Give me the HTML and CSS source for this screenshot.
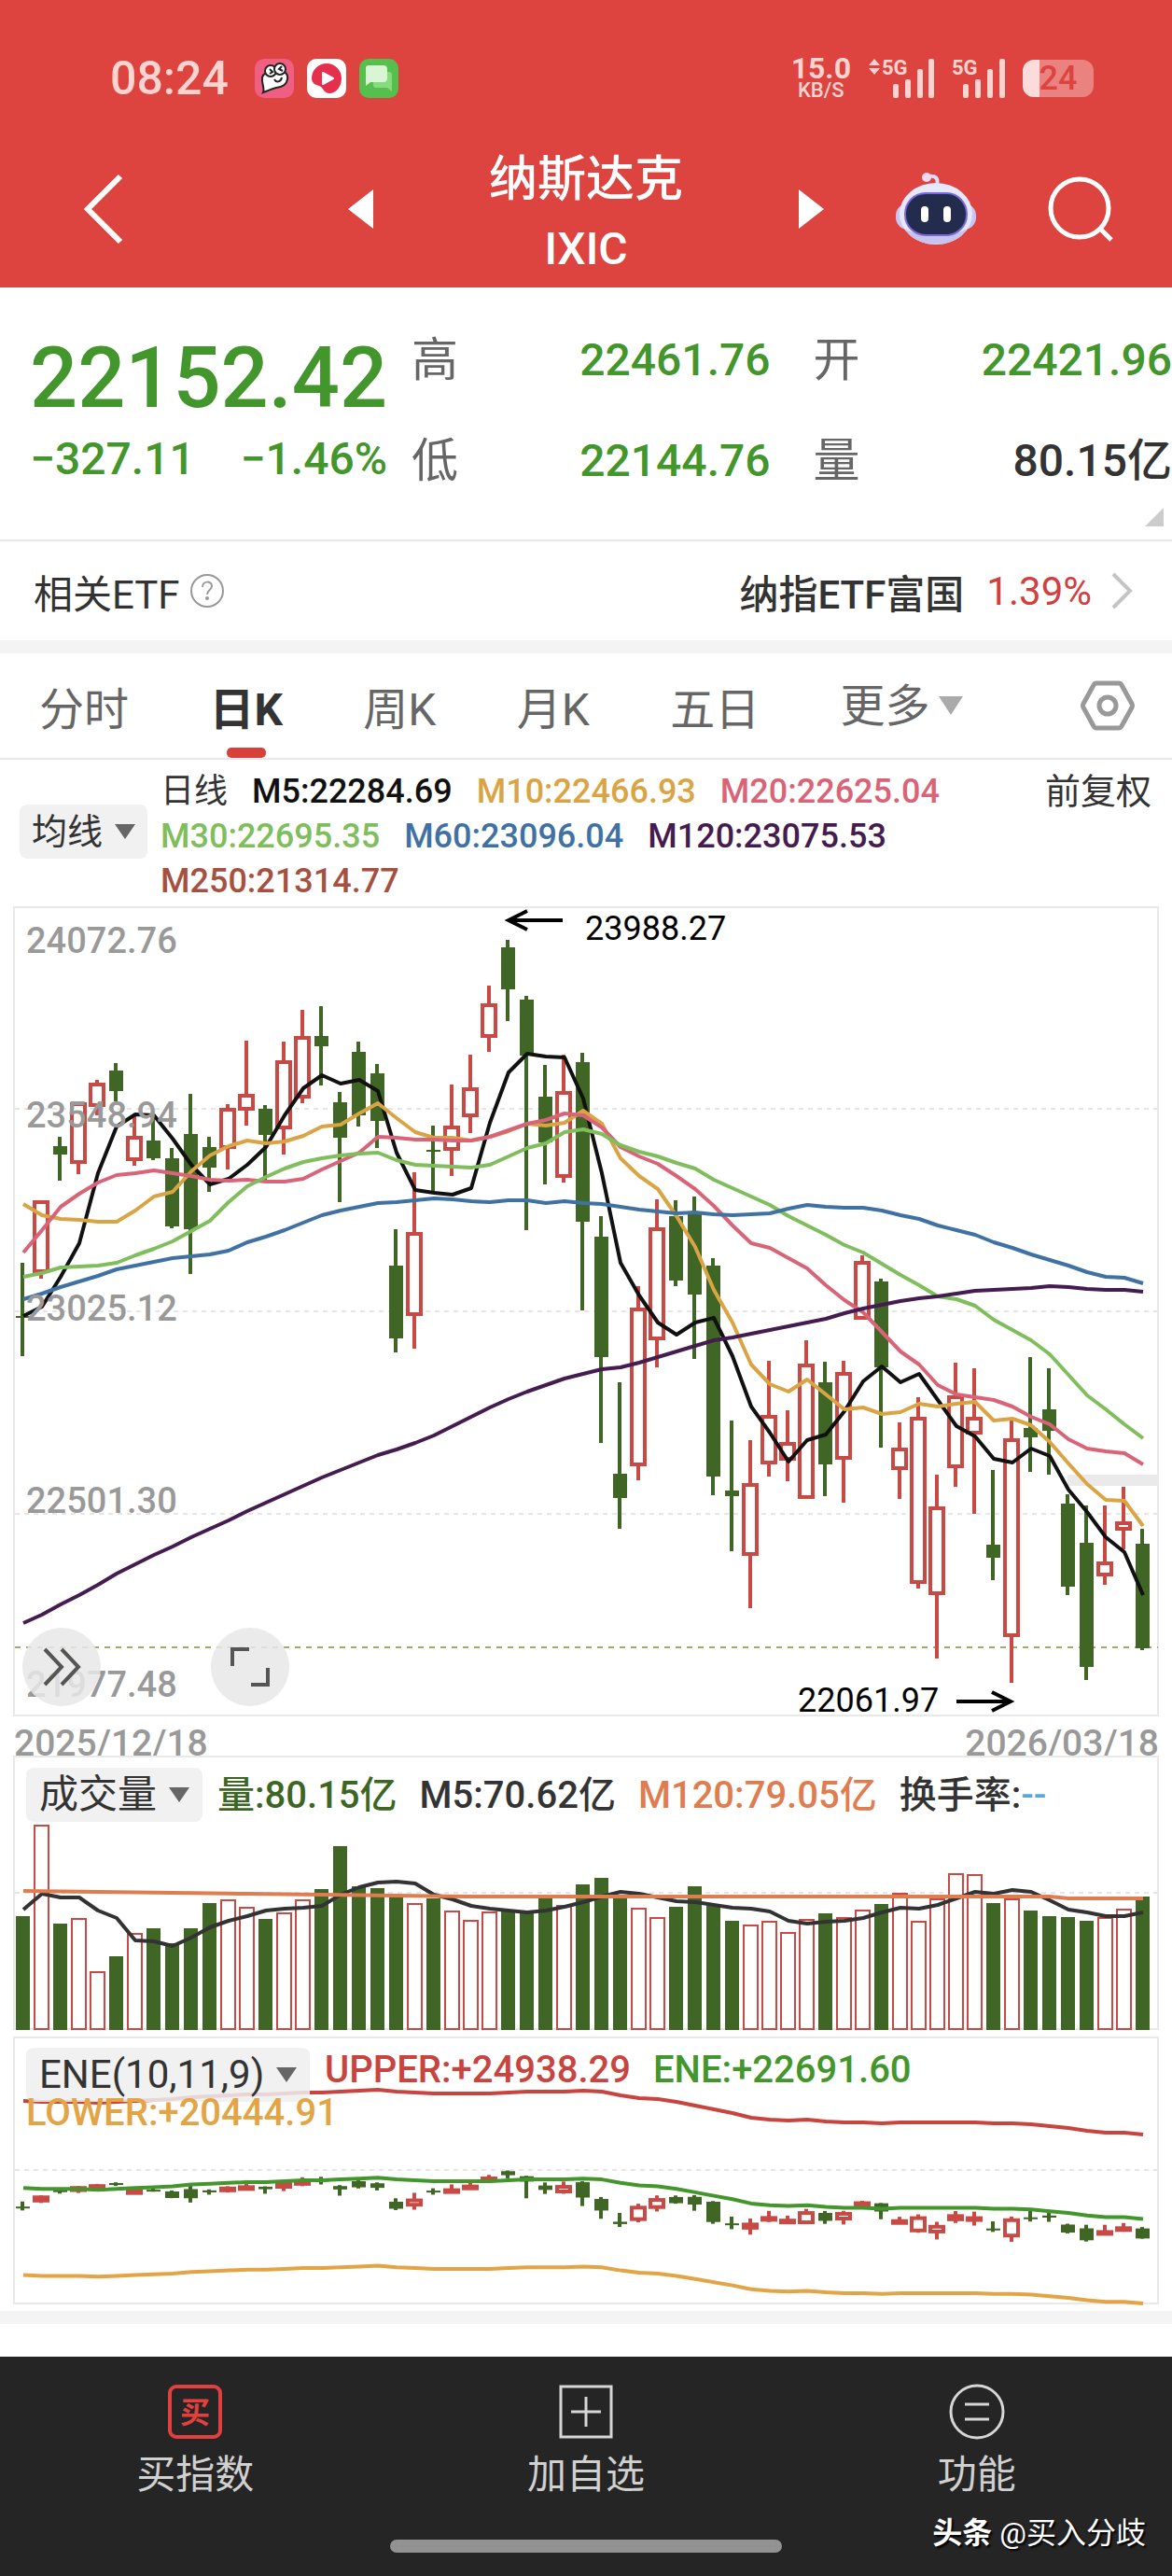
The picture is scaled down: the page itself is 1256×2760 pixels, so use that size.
FILE: index.html
```html
<!DOCTYPE html>
<html lang="zh-CN">
<head>
    <meta charset="UTF-8">
    <meta name="viewport" content="width=device-width, initial-scale=1.0">
    <title>纳斯达克 IXIC</title>
    <link rel="stylesheet" href="styles.css">
    <script src="script.js" defer></script>
</head>
<body>
    <header class="top">
        <div class="status">
            <span class="clock">08:24</span>
            <div class="apps">
                <svg width="42" height="42" viewBox="0 0 42 42">
                    <rect width="42" height="42" rx="10" fill="#ee5f82"/>
                    <path d="M8 20c1-4 5-6 11-6l8-1c6 0 9 4 8 9-1 6-5 8-12 9-5 1-8 3-14 5 2-4-2-10-1-16z" fill="#fff" stroke="#222" stroke-width="2"/>
                    <circle cx="17" cy="13" r="6" fill="#fff" stroke="#222" stroke-width="2"/>
                    <circle cx="27" cy="11" r="6" fill="#fff" stroke="#222" stroke-width="2"/>
                    <path d="M16 11l3 3-3 2M29 8l-3 3 4 2M21 22c2 4 7 3 8-2" fill="none" stroke="#222" stroke-width="2"/>
                </svg>
                <svg width="42" height="42" viewBox="0 0 42 42">
                    <rect width="42" height="42" rx="10" fill="#fff"/>
                    <path d="M21 5c9 0 16 7 16 16s-6 16-13 16c-5 0-6-4-9-7-3-2-10-2-10-9C5 12 12 5 21 5z" fill="#e62e4d"/>
                    <path d="M17 15l11 6-11 6z" fill="#fff" stroke="#fff" stroke-width="2" stroke-linejoin="round"/>
                </svg>
                <svg width="42" height="42" viewBox="0 0 42 42">
                    <rect width="42" height="42" rx="10" fill="#55c04e"/>
                    <path d="M16 14h16q3 0 3 3v18l-5-4H18q-3 0-3-3z" fill="#86db7a"/>
                    <path d="M10 7h16q4 0 4 4v10q0 4-4 4H12l-5 4V10q0-3 3-3z" fill="#d9f5d3"/>
                </svg>
            </div>
            <div class="speed"><b>15.0</b><span>KB/S</span></div>
            <svg class="signal" width="72" height="44" viewBox="0 0 72 44">
                <path d="M1 8l6-7 6 7zM1 11l6 7 6-7z"/>
                <text x="15" y="18">5G</text>
                <rect x="27" y="28" width="6" height="15" rx="2"/><rect x="40" y="23" width="6" height="20" rx="2"/><rect x="53" y="12" width="6" height="31" rx="2"/><rect x="65" y="1" width="6" height="42" rx="2"/>
            </svg>
            <svg class="signal" width="58" height="44" viewBox="0 0 58 44">
                <text x="0" y="18">5G</text>
                <rect x="12" y="28" width="6" height="15" rx="2"/><rect x="25" y="23" width="6" height="20" rx="2"/><rect x="38" y="12" width="6" height="31" rx="2"/><rect x="51" y="1" width="6" height="42" rx="2"/>
            </svg>
            <div class="battery">24</div>
        </div>
        <div class="titlebar">
            <div class="side side-left">
                <button class="icon-btn" type="button" aria-label="返回">
                    <svg width="42" height="76" viewBox="0 0 42 76"><path d="M39 3L4 38l35 35" fill="none" stroke="#fff" stroke-width="6"/></svg>
                </button>
                <button class="icon-btn" type="button" aria-label="上一个">
                    <svg width="27" height="42" viewBox="0 0 27 42"><path d="M27 0v42L0 21z" fill="#fff"/></svg>
                </button>
            </div>
            <h1 class="title">纳斯达克<span>IXIC</span></h1>
            <div class="side side-right">
                <button class="icon-btn" type="button" aria-label="下一个">
                    <svg width="27" height="42" viewBox="0 0 27 42"><path d="M0 0v42l27-21z" fill="#fff"/></svg>
                </button>
                <button class="icon-btn" type="button" aria-label="智能助手">
                    <svg width="86" height="78" viewBox="0 0 86 78">
                        <path d="M44 14c2-8-1-11-9-10" fill="none" stroke="#dcdcf8" stroke-width="4"/>
                        <circle cx="33" cy="5" r="5" fill="#f4d8ee"/>
                        <rect x="0" y="33" width="86" height="28" rx="13" fill="#c9c5f2"/>
                        <ellipse cx="43" cy="44" rx="39" ry="33" fill="#e6e8fb"/>
                        <path d="M10 60c10 22 56 22 66 0-14 10-52 10-66 0z" fill="#c6c3f0"/>
                        <rect x="10" y="22" width="66" height="45" rx="22" fill="#232c4c" stroke="#7a68d8" stroke-width="2"/>
                        <rect x="27" y="36" width="8" height="17" rx="4" fill="#fff"/>
                        <rect x="51" y="36" width="8" height="17" rx="4" fill="#fff"/>
                    </svg>
                </button>
                <button class="icon-btn" type="button" aria-label="搜索">
                    <svg width="72" height="72" viewBox="0 0 72 72"><circle cx="35" cy="35" r="31" fill="none" stroke="#fff" stroke-width="5"/><path d="M56 56l13 13" stroke="#fff" stroke-width="5"/></svg>
                </button>
            </div>
        </div>
    </header>

    <section class="quote">
        <div class="last">
            <p class="price">22152.42</p>
            <p class="change"><span>−327.11</span><span>−1.46%</span></p>
        </div>
        <dl class="stats">
            <div><dt>高</dt><dd>22461.76</dd></div>
            <div><dt>开</dt><dd>22421.96</dd></div>
            <div><dt>低</dt><dd>22144.76</dd></div>
            <div><dt>量</dt><dd class="dark">80.15亿</dd></div>
        </dl>
        <i class="corner"></i>
    </section>

    <a class="etf" href="#">
        <span class="etf-label">相关ETF</span>
        <svg width="38" height="38" viewBox="0 0 38 38"><circle cx="19" cy="19" r="17" fill="none" stroke="#999" stroke-width="2"/><path d="M14 15c0-7 10-7 10-1 0 4-5 4-5 9" fill="none" stroke="#999" stroke-width="2"/><circle cx="19" cy="27" r="2" fill="#999"/></svg>
        <span class="etf-name">纳指ETF富国</span>
        <span class="etf-rate">1.39%</span>
        <svg width="24" height="40" viewBox="0 0 24 40"><path d="M3 2l18 18L3 38" fill="none" stroke="#c4c4c4" stroke-width="4"/></svg>
    </a>

    <nav class="tabs">
        <button type="button">分时</button>
        <button type="button" class="active">日K</button>
        <button type="button">周K</button>
        <button type="button">月K</button>
        <button type="button">五日</button>
        <label class="more">
            <select aria-label="更多周期"><option>更多</option></select>
            <i class="caret"></i>
        </label>
        <button type="button" class="setting" aria-label="设置">
            <svg width="58" height="54" viewBox="0 0 58 54"><path d="M17 3h24q2 0 3 2l11 20q1 2 0 4L44 49q-1 2-3 2H17q-2 0-3-2L3 29q-1-2 0-4L14 5q1-2 3-2z" fill="none" stroke="#999" stroke-width="5"/><circle cx="29" cy="27" r="9" fill="none" stroke="#999" stroke-width="5"/></svg>
        </button>
    </nav>

    <main class="charts">
        <div class="legend">
            <label class="picker">
                <select aria-label="主图指标"><option>均线</option></select>
                <i class="caret"></i>
            </label>
            <p class="ma-list">
                <span>日线</span>
                <span class="m5">M5:22284.69</span>
                <span class="m10">M10:22466.93</span>
                <span class="m20">M20:22625.04</span>
                <span class="m30">M30:22695.35</span>
                <span class="m60">M60:23096.04</span>
                <span class="m120">M120:23075.53</span>
                <span class="m250">M250:21314.77</span>
            </p>
            <button type="button" class="adjust">前复权</button>
        </div>

        <div class="panel">
            <svg id="kline" class="plot" viewBox="0 0 1256 880" role="img" aria-label="日K线图"></svg>
            <div class="tools">
                <button type="button" aria-label="展开">
                    <svg width="40" height="42" viewBox="0 0 40 42"><path d="M2 2l18 19L2 40M20 2l18 19-18 19" fill="none" stroke="#555" stroke-width="4"/></svg>
                </button>
                <button type="button" aria-label="全屏">
                    <svg width="44" height="44" viewBox="0 0 44 44"><path d="M3 21V3h18M41 23v18H23" fill="none" stroke="#555" stroke-width="4"/></svg>
                </button>
            </div>
        </div>
        <div class="dates"><span>2025/12/18</span><span>2026/03/18</span></div>

        <div class="panel">
            <svg id="volume" class="plot" viewBox="0 0 1256 300" role="img" aria-label="成交量图"></svg>
            <div class="sub-legend">
                <label class="picker">
                    <select aria-label="副图一"><option>成交量</option></select>
                    <i class="caret"></i>
                </label>
                <p>
                    <span class="vol">量:80.15亿</span>
                    <span>M5:70.62亿</span>
                    <span class="vol120">M120:79.05亿</span>
                    <span>换手率:<b class="dash">--</b></span>
                </p>
            </div>
        </div>

        <div class="panel">
            <svg id="ene" class="plot" viewBox="0 0 1256 296" role="img" aria-label="ENE图"></svg>
            <div class="sub-legend ene-legend">
                <label class="picker">
                    <select aria-label="副图二"><option>ENE(10,11,9)</option></select>
                    <i class="caret"></i>
                </label>
                <p>
                    <span class="upper">UPPER:+24938.29</span>
                    <span class="mid">ENE:+22691.60</span>
                </p>
                <p class="lower">LOWER:+20444.91</p>
            </div>
        </div>
    </main>

    <footer class="bottom">
        <nav class="actions">
            <a href="#">
                <svg width="60" height="60" viewBox="0 0 60 60"><rect x="3" y="3" width="54" height="54" rx="7" fill="none" stroke="#e0413f" stroke-width="4"/><text x="30" y="42" text-anchor="middle" class="buy">买</text></svg>
                买指数
            </a>
            <a href="#">
                <svg width="60" height="60" viewBox="0 0 60 60"><path d="M3 3h54v54H3zM30 14v32M14 30h32" fill="none" stroke="#d6d6d6" stroke-width="3"/></svg>
                加自选
            </a>
            <a href="#">
                <svg width="60" height="60" viewBox="0 0 60 60"><circle cx="30" cy="30" r="28" fill="none" stroke="#d6d6d6" stroke-width="3"/><path d="M17 22h26M17 38h26" stroke="#d6d6d6" stroke-width="3"/></svg>
                功能
            </a>
        </nav>
        <i class="home-bar"></i>
        <p class="mark"><b>头条</b> @买入分歧</p>
    </footer>
</body>
</html>
```
FILE: styles.css
```css
* {
    box-sizing: border-box;
}

body {
    margin: 0;
    background: #fff;
    color: #333;
    font-family: Roboto, "Noto Sans CJK SC", sans-serif;
    font-size: 42px;
}

p, h1, dl, dd {
    margin: 0;
}

button, select {
    padding: 0;
    border: 0;
    background: none;
    color: inherit;
    font: inherit;
    appearance: none;
}

a {
    color: inherit;
    text-decoration: none;
}

svg {
    display: block;
    flex: none;
    overflow: visible;
}

/* header */
.top {
    background: #dd433f;
    color: #fff;
}

.status {
    display: flex;
    align-items: center;
    height: 156px;
    padding: 12px 84px 0 118px;
    color: #ffd3d0;
}

.clock {
    font-size: 50px;
    font-weight: 500;
}

.apps {
    display: flex;
    gap: 14px;
    margin: 0 auto 0 28px;
}

.speed {
    display: flex;
    flex-direction: column;
    align-items: center;
    margin-right: 18px;
    font-size: 22px;
    font-weight: 500;
    line-height: 22px;
}

.speed b {
    font-size: 32px;
    font-weight: 700;
    line-height: 26px;
}

.signal {
    margin-right: 18px;
    fill: #ffd3d0;
    font-size: 22px;
    font-weight: 700;
}

.battery {
    width: 76px;
    height: 40px;
    border-radius: 12px;
    background: linear-gradient(90deg, #fbdcda 24%, #ea8380 24%);
    color: #dd433f;
    font-size: 36px;
    font-weight: 500;
    line-height: 40px;
    text-align: center;
}

.titlebar {
    display: grid;
    grid-template-columns: 1fr 456px 1fr;
    height: 152px;
}

.side {
    display: flex;
    align-items: center;
    justify-content: space-between;
    padding-bottom: 16px;
}

.side-left {
    padding-left: 90px;
}

.side-right {
    padding-right: 62px;
}

.title {
    font-size: 52px;
    font-weight: 500;
    line-height: 74px;
    text-align: center;
}

.title span {
    display: block;
    font-size: 48px;
}

/* quote */
.quote {
    position: relative;
    display: flex;
    gap: 26px;
    height: 272px;
    padding: 38px 0 0 32px;
    border-bottom: 2px solid #e8e8e8;
}

.last, .stats dd {
    color: #43962b;
}

.price {
    height: 116px;
    font-size: 90px;
    font-weight: 500;
    line-height: 120px;
}

.change {
    display: flex;
    justify-content: space-between;
    font-size: 48px;
    font-weight: 500;
    line-height: 60px;
}

.stats {
    flex: 1;
    display: grid;
    grid-template-columns: 1fr 1fr;
    column-gap: 46px;
    grid-auto-rows: 108px;
}

.stats div {
    display: flex;
    justify-content: space-between;
    font-size: 50px;
    line-height: 80px;
}

.stats dt {
    color: #666;
}

.stats dd {
    font-size: 48px;
    font-weight: 500;
}

.stats .dark {
    color: #333;
}

.corner {
    position: absolute;
    right: 9px;
    bottom: 14px;
    border: 10px solid;
    border-color: transparent #ccc #ccc transparent;
}

.etf {
    display: flex;
    align-items: center;
    height: 120px;
    padding: 0 42px 0 36px;
    border-bottom: 14px solid #f4f4f4;
}

.etf-label {
    margin-right: 10px;
}

.etf-name {
    margin-left: auto;
    font-weight: 500;
}

.etf-rate {
    margin: 0 20px 0 24px;
    color: #d0403f;
}

/* tabs */
.tabs {
    display: flex;
    align-items: stretch;
    justify-content: space-between;
    height: 114px;
    padding: 0 40px 0 42px;
    border-bottom: 2px solid #e8e8e8;
    color: #666;
    font-size: 48px;
}

.tabs .active {
    position: relative;
    color: #333;
    font-weight: 700;
}

.tabs .active::after {
    content: "";
    position: absolute;
    left: 50%;
    bottom: 0;
    width: 42px;
    height: 11px;
    margin-left: -21px;
    border-radius: 5px;
    background: #d8403a;
}

.more {
    display: flex;
    align-items: center;
    gap: 8px;
    color: #666;
}

.caret {
    border: 11px solid transparent;
    border-top: 16px solid #666;
    border-bottom: 0;
}

.more .caret {
    border-width: 20px 13px 0;
    border-top-color: #aaa;
}

.setting {
    margin-left: 40px;
}

/* chart legends */
.legend {
    display: flex;
    align-items: flex-start;
    height: 146px;
    padding: 10px 22px 0 21px;
    font-size: 36px;
    line-height: 48px;
}

.picker {
    display: flex;
    align-items: center;
    gap: 12px;
    height: 58px;
    padding: 0 13px;
    border-radius: 8px;
    background: rgba(238, 238, 238, .85);
    font-size: 38px;
}

.legend .picker {
    margin-top: 38px;
    margin-right: 14px;
}

.ma-list {
    flex: 1;
    display: flex;
    flex-wrap: wrap;
    column-gap: 26px;
}

.ma-list span {
    font-weight: 500;
}

.ma-list span:first-child {
    font-weight: 400;
}

.m5 { color: #111; }
.m10 { color: #daa444; }
.m20 { color: #d96477; }
.m30 { color: #80bd5c; }
.m60 { color: #3f72a3; }
.m120 { color: #451c50; }
.m250 { color: #a55141; }

.adjust {
    font-size: 38px;
}

.panel {
    position: relative;
}

.plot {
    width: 100%;
    height: auto;
}

.tools {
    position: absolute;
    left: 24px;
    bottom: 12px;
    display: flex;
    gap: 118px;
}

.tools button {
    display: flex;
    align-items: center;
    justify-content: center;
    width: 84px;
    height: 84px;
    border-radius: 50%;
    background: rgba(232, 232, 232, .85);
}

.dates {
    display: flex;
    justify-content: space-between;
    height: 40px;
    padding: 8px 14px 0 15px;
    color: #999;
    font-size: 39px;
    font-weight: 500;
    line-height: 40px;
}

.sub-legend {
    position: absolute;
    top: 14px;
    left: 28px;
    right: 16px;
    display: flex;
    flex-wrap: wrap;
    column-gap: 16px;
    font-size: 40px;
    line-height: 60px;
}

.sub-legend p {
    display: flex;
    gap: 24px;
    font-weight: 500;
}

.sub-legend .picker {
    padding: 0 14px;
    font-size: 42px;
}

.sub-legend b {
    font-weight: 500;
}

.ene-legend p {
    line-height: 48px;
}

.ene-legend .lower {
    flex-basis: 100%;
    margin-top: -12px;
}

.vol { color: #3d6624; }
.vol120 { color: #df7c50; }
.dash { color: #5aa9dc; }
.upper { color: #c7443f; }
.mid { color: #43962b; }
.lower { color: #e2a445; }

/* plots */
.frame { fill: none; stroke: #e9e9e9; stroke-width: 2; }
.grid { stroke: #e6e6e6; stroke-width: 2; stroke-dasharray: 5 5; }
.now { stroke: #a3a86f; stroke-width: 2; stroke-dasharray: 6 6; }
.gap { fill: #eaeaea; }
.up { fill: #fff; stroke: #c94a45; stroke-width: 4; }
.up-thin { fill: #fff; stroke: #c94a45; stroke-width: 2; }
.down { fill: #3f6624; }
.wick-up { stroke: #c94a45; stroke-width: 4; }
.wick-down { stroke: #3f6624; stroke-width: 4; }
.line { fill: none; stroke: currentColor; stroke-width: 4; stroke-linejoin: round; }
.axis { fill: #999; font-size: 38px; font-weight: 500; }
.note { fill: #000; font-size: 36px; }
.arrow { fill: none; stroke: #000; stroke-width: 4; }

/* bottom */
.bottom {
    position: relative;
    height: 284px;
    border-top: 14px solid #f4f4f4;
}

.actions {
    display: grid;
    grid-template-columns: repeat(3, 1fr);
    height: 235px;
    margin-top: 35px;
    padding-top: 29px;
    background: #252525;
    color: #d0d0d0;
}

.actions a {
    display: flex;
    flex-direction: column;
    align-items: center;
    gap: 8px;
    line-height: 60px;
}

.buy {
    fill: #e0413f;
    font-size: 32px;
    font-weight: 700;
}

.home-bar {
    position: absolute;
    left: 50%;
    bottom: 25px;
    width: 420px;
    height: 14px;
    margin-left: -210px;
    border-radius: 7px;
    background: #929292;
}

.mark {
    position: absolute;
    right: 28px;
    bottom: 24px;
    color: #fff;
    font-size: 32px;
    line-height: 44px;
    text-shadow: 2px 2px 2px #000;
}
```
FILE: script.js
```js
// one row per trading day: up, high, body top, body bottom, low, volume top
const days = [
    [0, 393, 450, 452, 493, 173], [1, 326, 326, 404, 410, 75], [0, 258, 268, 277, 305, 181],
    [1, 221, 221, 287, 298, 175], [1, 197, 200, 226, 235, 232], [0, 179, 187, 209, 220, 216],
    [1, 235, 257, 284, 289, 191], [0, 235, 262, 281, 283, 186], [0, 270, 281, 354, 356, 202],
    [0, 212, 255, 357, 405, 186], [0, 258, 269, 291, 317, 159], [1, 223, 227, 271, 293, 155],
    [1, 155, 212, 230, 246, 163], [0, 224, 228, 256, 307, 176], [1, 156, 176, 250, 277, 169],
    [1, 122, 150, 217, 222, 155], [0, 118, 150, 161, 203, 144], [0, 210, 221, 259, 328, 98],
    [0, 156, 167, 235, 247, 141], [0, 180, 190, 241, 270, 143], [0, 357, 396, 474, 489, 152],
    [1, 296, 360, 450, 485, 159], [0, 246, 272, 274, 317, 154], [1, 202, 246, 273, 300, 167],
    [1, 170, 205, 237, 254, 177], [1, 96, 115, 152, 167, 168], [0, 47, 55, 100, 134, 167],
    [0, 107, 111, 171, 358, 168], [0, 181, 215, 264, 309, 154], [1, 170, 209, 302, 307, 161],
    [0, 168, 178, 349, 444, 139], [0, 343, 365, 494, 586, 132], [0, 521, 619, 645, 678, 152],
    [1, 418, 441, 611, 626, 164], [1, 325, 355, 476, 505, 174], [0, 326, 343, 412, 418, 163],
    [0, 322, 341, 427, 496, 141], [0, 388, 396, 622, 642, 160], [0, 562, 637, 643, 702, 178],
    [1, 583, 629, 707, 763, 182], [1, 498, 556, 609, 622, 178], [1, 551, 585, 605, 627, 190],
    [1, 476, 501, 646, 646, 176], [0, 499, 521, 609, 643, 170], [1, 498, 510, 604, 650, 174],
    [1, 385, 391, 454, 454, 166], [0, 410, 413, 505, 591, 160], [1, 564, 591, 615, 646, 148],
    [1, 537, 558, 737, 742, 178], [1, 620, 654, 749, 817, 154], [1, 500, 535, 613, 633, 127],
    [1, 506, 558, 577, 662, 128], [0, 615, 695, 709, 733, 159], [1, 561, 581, 794, 843, 154],
    [0, 494, 570, 580, 617, 167], [0, 506, 550, 573, 620, 173], [0, 641, 651, 740, 749, 174],
    [0, 653, 693, 826, 840, 178], [1, 653, 713, 729, 738, 174], [1, 633, 670, 680, 700, 165],
    [0, 678, 694, 806, 808, 152]
];

const averages = {
    m5: [450,440,408,372,297,247,234,235,260,288,309,303,288,269,235,206,192,201,197,209,275,315,318,320,313,243,189,169,172,173,217,297,393,428,457,470,457,452,493,547,575,606,583,577,552,520,504,521,512,540,568,579,603,607,592,600,636,660,687,703,749],
    m10: [330,342,346,347,349,349,337,322,317,295,278,268,262,265,263,257,247,245,233,222,238,253,259,259,262,258,252,244,246,243,230,244,281,300,314,343,376,422,457,502,523,531,518,534,550,548,555,553,544,547,544,542,562,560,567,585,608,630,647,648,675],
    m20: [382,358,333,319,307,299,297,294,297,300,304,305,304,306,306,303,293,284,275,258,259,261,261,262,262,258,251,244,240,233,235,248,269,279,287,300,314,332,353,372,377,388,399,417,433,446,467,488,502,524,534,537,540,547,558,566,582,592,595,597,609],
    m30: [408,404,398,397,396,393,385,378,370,359,348,328,311,301,292,285,281,278,276,275,283,288,289,290,291,288,279,270,265,253,250,255,267,274,279,286,292,304,313,322,331,343,353,363,374,382,394,406,417,429,432,439,454,465,476,491,513,535,550,566,581],
    m60: [432,426,419,413,407,400,396,392,388,386,384,380,371,365,358,350,342,337,333,329,328,326,324,325,327,328,326,326,329,327,329,330,333,336,338,340,339,341,342,341,340,335,331,333,334,334,337,342,346,353,358,363,371,377,384,390,396,403,408,409,415],
    m120: [779,770,759,749,738,726,716,706,697,687,678,669,659,650,641,632,623,615,607,599,593,586,578,568,558,548,539,531,524,517,512,507,505,500,494,488,482,476,473,469,465,461,457,453,447,442,438,434,431,429,426,423,422,421,420,418,419,421,422,422,424]
};

const volM5 = [166,149,153,153,167,175,199,200,205,196,185,178,173,167,165,164,162,150,142,137,136,138,150,155,162,165,167,169,167,163,158,152,147,149,153,157,158,161,164,165,168,178,181,179,178,175,169,164,165,161,154,147,149,145,147,156,166,169,173,173,169];
const volM120 = days.map((d, i) => i < 52 ? 146 + Math.min(6, i / 4) : i < 56 ? 152 : 154);

const eneUpper = [71,72,72,72,73,72,71,70,69,67,66,65,64,64,63,62,62,61,60,59,61,62,63,63,63,63,62,61,61,61,60,61,65,68,69,72,76,80,84,89,91,92,91,93,94,94,95,94,94,94,94,94,95,95,96,98,100,103,105,105,107];
const eneMid = eneUpper.map(y => y * 0.92 + 99);
const eneLower = eneUpper.map((y, i) => eneMid[i] * 2 - y);

const px = i => 24 + i * 20;

function hline(y, name) {
    return `<path class="${name}" d="M16 ${y}H1241"/>`;
}

function line(points, name) {
    return `<polyline class="line ${name}" points="${points.map((y, i) => px(i) + 1 + "," + y.toFixed(1)).join(" ")}"/>`;
}

function candle(day, i, scale, offset) {
    const [up, high, top, bottom, low] = day.map(v => v * scale + offset);
    const isUp = day[0] === 1;
    const height = Math.max(bottom - top, 2);
    const x = px(i);
    const wick = `<path class="wick-${isUp ? "up" : "down"}" d="M${x} ${high}V${low}"/>`;
    if (!isUp) {
        return wick + `<rect class="down" x="${x - 7}" y="${top}" width="15" height="${height}"/>`;
    }
    return wick + `<rect class="up" x="${x - 7}" y="${top + 2}" width="14" height="${Math.max(height - 4, 2)}"/>`;
}

function drawKline() {
    let out = `<rect class="frame" x="15" y="12" width="1226" height="866"/>`;
    out += [228, 445, 662].map(y => hline(y, "grid")).join("");
    out += `<rect class="gap" x="1144" y="620" width="98" height="12"/>`;
    out += hline(805, "now");
    out += days.map((d, i) => candle(d, i, 1, 0)).join("");
    for (const name in averages) {
        out += line(averages[name], name);
    }
    const labels = [[61, "24072.76"], [248, "23548.94"], [455, "23025.12"], [661, "22501.30"], [858, "21977.48"]];
    out += labels.map(l => `<text class="axis" x="28" y="${l[0]}">${l[1]}</text>`).join("");
    out += `<path class="arrow" d="M603 26H546M565 16L545 26l20 10"/><text class="note" x="627" y="47">23988.27</text>`;
    out += `<path class="arrow" d="M1025 863h57M1063 853l20 10-20 10"/><text class="note" x="855" y="874">22061.97</text>`;
    document.getElementById("kline").innerHTML = out;
}

function drawVolume() {
    let out = `<rect class="frame" x="15" y="2" width="1226" height="292"/>` + hline(148, "grid");
    out += days.map((d, i) => {
        if (d[0]) {
            return `<rect class="up-thin" x="${px(i) - 7}" y="${d[5] + 1}" width="15" height="${293 - d[5]}"/>`;
        }
        return `<rect class="down" x="${px(i) - 7}" y="${d[5]}" width="15" height="${295 - d[5]}"/>`;
    }).join("");
    out += line(volM5, "") + line(volM120, "vol120");
    document.getElementById("volume").innerHTML = out;
}

function drawEne() {
    let out = `<rect class="frame" x="15" y="3" width="1226" height="285"/>` + hline(145, "grid");
    out += days.map((d, i) => candle(d, i, 0.096, 141)).join("");
    out += line(eneUpper, "upper") + line(eneMid, "mid") + line(eneLower, "lower");
    document.getElementById("ene").innerHTML = out;
}

drawKline();
drawVolume();
drawEne();
```
